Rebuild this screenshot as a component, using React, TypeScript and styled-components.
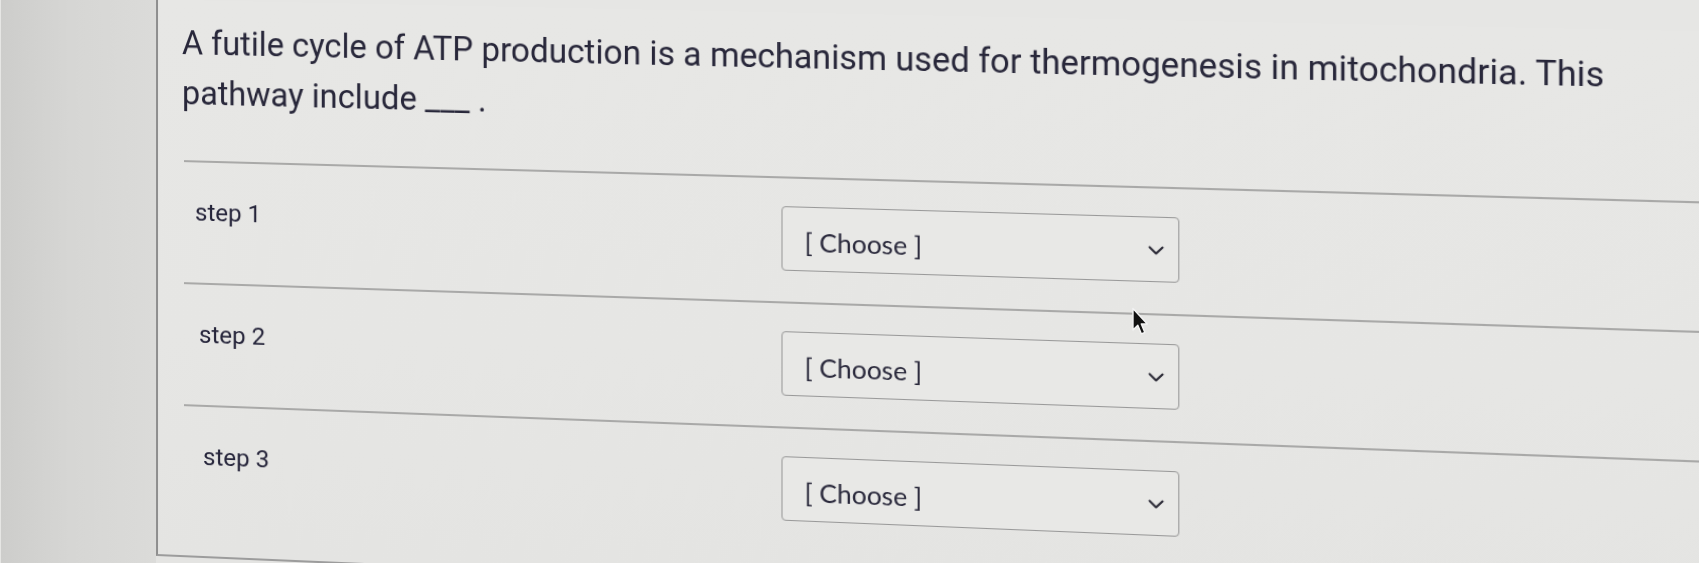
import React from "react";
import styled, { createGlobalStyle } from "styled-components";

// The reference is a photo of a screen: a slight skew + perspective.
const K = 0.000041;
const S = 0.0206;

const Global = createGlobalStyle`
  html, body { margin: 0; padding: 0; }
  body { background: #e6e6e4; overflow: hidden; }
  * { box-sizing: border-box; }
`;

const Page = styled.div`
  position: relative;
  width: 1699px;
  height: 563px;
  overflow: hidden;
  background: #e6e6e4;
`;

const Sheet = styled.div`
  width: 1800px;
  height: 660px;
  display: flex;
  background: #e4e4e2;
  transform-origin: 180px 0px;
  transform: matrix3d(1, ${S}, 0, ${-K}, 0, 1, 0, 0, 0, 0, 1, 0, 0, 0, 0, 1);
`;

const Gutter = styled.div`
  width: 156px;
  flex: none;
  background: linear-gradient(90deg, #cdcdcb 0%, #d6d6d4 45%, #dbdbd9 100%);
`;

const Card = styled.section`
  flex: 1;
  align-self: flex-start;
  border-left: 2px solid #8e8e8e;
  border-bottom: 2px solid #9c9c9c;
  padding: 18px 0 29px 24px;
  background: linear-gradient(180deg, #e7e7e5 0%, #e6e6e4 60%, #e4e4e2 100%);
`;

const Question = styled.p`
  margin: 0;
  width: 1390px;
  font: 400 32.3px/50px Roboto, "Liberation Sans", sans-serif;
  color: #28273a;
`;

const Rows = styled.div`
  margin: 42px 0 0 2px;
`;

const Row = styled.div`
  display: grid;
  grid-template-columns: 583px 373px;
  align-items: start;
  border-top: 2px solid #a9a9a8;
  padding: 27px 0 30px;
`;

const Label = styled.div<{ $indent: number }>`
  padding: 6px 0 0 ${(p) => p.$indent}px;
  font: 400 24px/34px Roboto, "Liberation Sans", sans-serif;
  color: #25243a;
`;

const Select = styled.div`
  height: 63px;
  border: 1.5px solid #999999;
  border-radius: 4px;
  display: flex;
  align-items: center;
  justify-content: space-between;
  padding: 4px 13px 0 21px;
  font: 400 25px Lato, "Liberation Sans", sans-serif;
  color: #28273a;
  background: #e8e8e6;
`;

const Chevron = styled.svg`
  width: 15px;
  height: 9px;
  flex: none;
  margin-top: -2px;
`;

const Cursor = styled.svg`
  position: absolute;
  left: 1131px;
  top: 307px;
  width: 17px;
  height: 29px;
`;

const steps = [
  { label: "step 1", indent: 11 },
  { label: "step 2", indent: 15 },
  { label: "step 3", indent: 19 },
];

export default function App() {
  return (
    <Page>
      <Global />
      <Sheet>
        <Gutter />
        <Card>
          <Question>
            A futile cycle of ATP production is a mechanism used for thermogenesis in mitochondria. This
            pathway include ___ .
          </Question>
          <Rows>
            {steps.map((s) => (
              <Row key={s.label}>
                <Label $indent={s.indent}>{s.label}</Label>
                <Select role="combobox" aria-label={s.label}>
                  <span>[ Choose ]</span>
                  <Chevron viewBox="0 0 15 9">
                    <polyline
                      points="1.5,1.5 7.5,7.5 13.5,1.5"
                      fill="none"
                      stroke="#2c2b37"
                      strokeWidth="2"
                      strokeLinecap="round"
                      strokeLinejoin="round"
                    />
                  </Chevron>
                </Select>
              </Row>
            ))}
          </Rows>
        </Card>
      </Sheet>
      <Cursor viewBox="0 0 13 22">
        <path
          d="M1.5 1 L1.5 17.5 L5.2 13.9 L7.9 20.4 L10.5 19.3 L7.9 12.9 L12.5 12.9 Z"
          fill="#111"
          stroke="#f4f4f4"
          strokeWidth="1.1"
          strokeLinejoin="round"
        />
      </Cursor>
    </Page>
  );
}
